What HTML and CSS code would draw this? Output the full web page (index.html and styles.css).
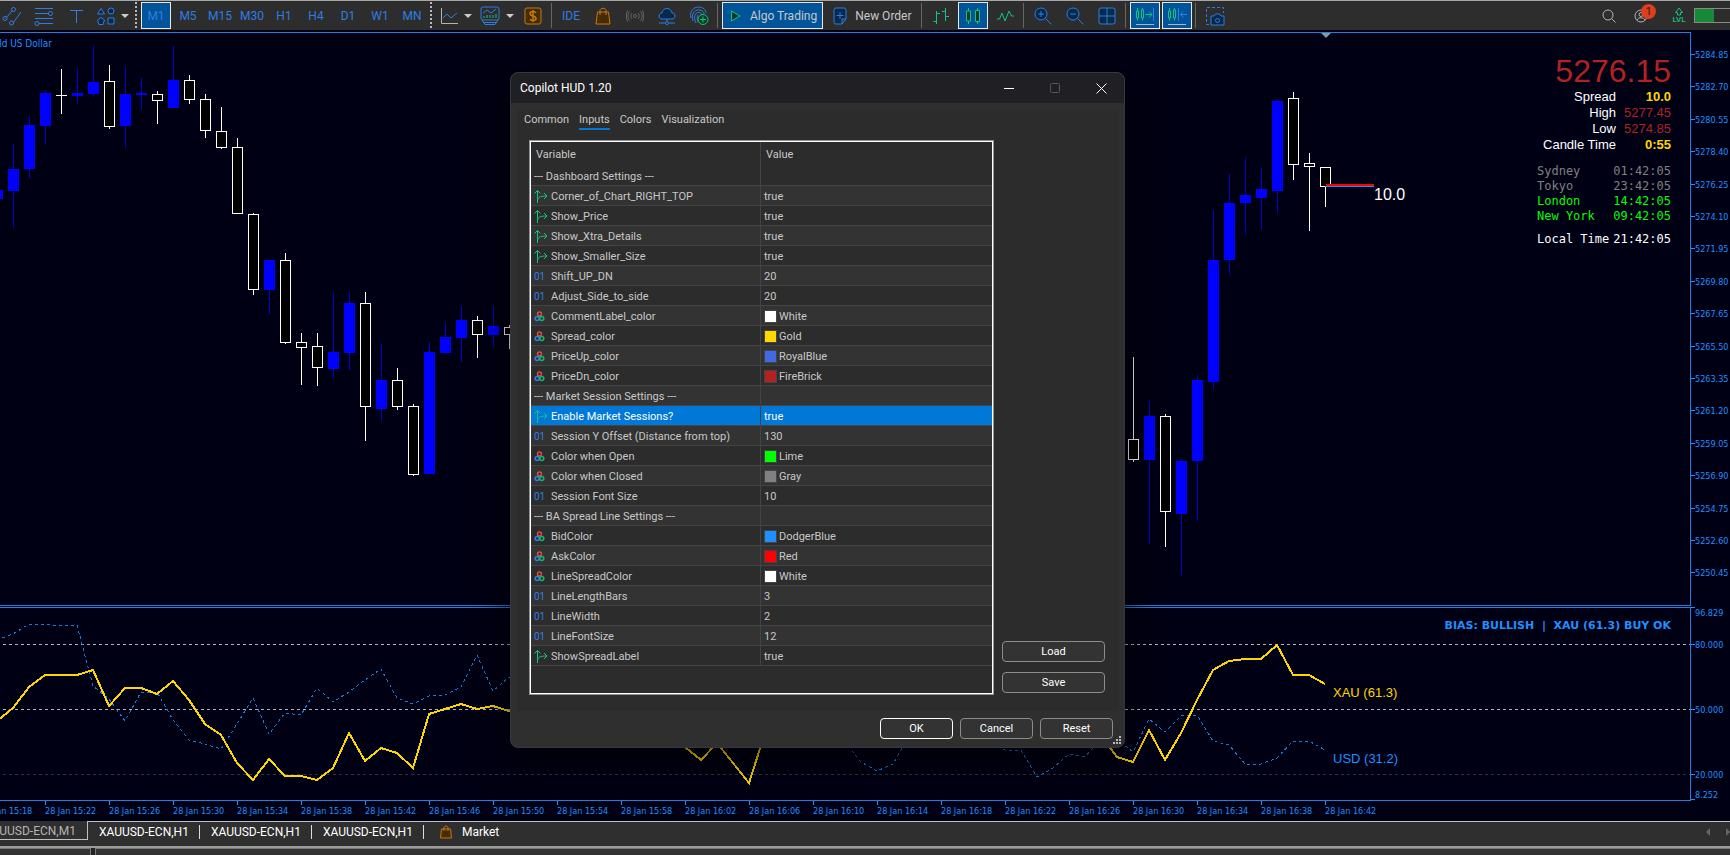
FILE: index.html
```html
<!DOCTYPE html>
<html lang="en">
<head>
  <meta charset="UTF-8">
  <title>XAUUSD-ECN,M1</title>
  <link rel="stylesheet" href="styles.css">
</head>
<body>

  <!-- Toolbar -->
  <header class="toolbar">
    <button class="tool" aria-label="Channel"><svg width="20" height="20" viewBox="0 0 20 20"><path d="M3.500 12.500L10 5M11 17L19 6"/><circle cx="3" cy="12.500" r="2"/><circle cx="11.500" cy="3.500" r="2"/><circle cx="9.500" cy="17" r="2"/></svg></button>
    <button class="tool" aria-label="Fibonacci"><svg width="20" height="20" viewBox="0 0 20 20"><path d="M1 2.500h18M1 7.500h14M1 12.500h18M5 17.500h14"/><circle cx="16.500" cy="7.500" r="2"/><circle cx="3" cy="17.500" r="2"/></svg></button>
    <button class="tool" aria-label="Text"><svg width="20" height="20" viewBox="0 0 20 20"><path d="M4 4.500h13M10.500 4.500V17"/></svg></button>
    <button class="tool tool-wide" aria-label="Objects"><svg class="shaded" width="18" height="20" viewBox="0 0 18 20"><path d="M4 2.500L7.500 8H.5zM11 12h6v6h-6zM4 11.500l3.500 2.500-1.500 4.500H2L.5 14z"/><circle cx="14" cy="5" r="3"/></svg><i class="caret"></i></button>
    <span class="grip-line"></span>

    <button class="tool period active">M1</button>
    <button class="tool period">M5</button>
    <button class="tool period">M15</button>
    <button class="tool period">M30</button>
    <button class="tool period">H1</button>
    <button class="tool period">H4</button>
    <button class="tool period">D1</button>
    <button class="tool period">W1</button>
    <button class="tool period">MN</button>
    <span class="grip-line"></span>

    <button class="tool tool-wide" aria-label="Chart type"><svg width="18" height="20" viewBox="0 0 18 20"><path class="gray" d="M1.500 2v15.500H18"/><path d="M3 12l4-4 4 4 6-5"/></svg><i class="caret"></i></button>
    <button class="tool tool-wide" aria-label="Indicators"><svg width="20" height="20" viewBox="0 0 20 20"><rect x="1" y="1" width="18" height="13" rx="2"/><path d="M3 7l4-3 4 3 5-4M2 14l3 4.500h10L18 14M3 16.500h14"/><path class="green" d="M4 12v-2M7 12v-3M10 12V9M13 12V9M16 12V8"/></svg><i class="caret"></i></button>
    <button class="tool" aria-label="Deposit"><svg class="orange" width="18" height="18" viewBox="0 0 18 18"><rect x="1" y="1" width="16" height="16" rx="2" fill="#452c04"/><path stroke-width="1.500" d="M12 6c-.5-1-1.500-1.500-3-1.500S6 5.200 6 6.500 7 8.500 9 9s3 1.200 3 2.500-1 2-3 2-2.500-.5-3-1.500M9 3v12"/></svg></button>
    <span class="divider"></span>
    <button class="tool period">IDE</button>
    <button class="tool" aria-label="Market"><svg class="orange" width="16" height="18" viewBox="0 0 16 18"><path fill="#452c04" d="M2.500 5h11L15 17H1z"/><path d="M5 8V3.500C5 .5 11 .5 11 3.500V8"/></svg></button>
    <button class="tool" aria-label="Signals"><svg class="dim" width="18" height="14" viewBox="0 0 18 14"><circle cx="9" cy="7" r="1.500"/><path d="M6 4c-1.500 1.700-1.500 4.300 0 6M12 4c1.500 1.700 1.500 4.300 0 6M3.500 2.500C1.500 5 1.500 9 3.500 11.500M14.500 2.500c2 2.500 2 6.500 0 9M1.500 1.500C0 4.500 0 9.500 1.500 12.500M16.500 1.500c1.500 3 1.500 8 0 11"/></svg></button>
    <button class="tool" aria-label="Virtual hosting"><svg class="shaded" width="18" height="18" viewBox="0 0 18 18"><path d="M4.500 12C2 12 1 10.500 1 9s1-3 3-3c.3-2.500 2.200-4.500 5-4.500S13.700 3.500 14 6c2 0 3 1.500 3 3s-1 3-3.500 3z"/><path d="M9 12v3M1 16h6M11 16h6"/><circle cx="9" cy="16" r="1.500"/></svg></button>
    <button class="tool" aria-label="Identity"><svg width="20" height="20" viewBox="0 0 20 20"><path d="M2 12C0 5 5 1 9.500 1S17 4 17 7M4 15C2 8 5 4 9.500 4S15 7 15 8M7 17C4 11 6 6.500 9.500 6.500c2 0 3 1 3 2.500M9 16c-1-3-1-6 0-7"/><g class="green"><circle cx="14" cy="13.500" r="5" fill="#123a2b"/><path d="M14 10.500v6M11 13.500h6"/></g></svg></button>
    <span class="divider"></span>

    <button class="text-tool active"><svg class="green" width="12" height="14" viewBox="0 0 12 14"><path fill="#123a2b" d="M1.500 2v10L10 7z"/></svg>Algo Trading</button>
    <button class="text-tool"><svg width="14" height="18" viewBox="0 0 14 18"><path fill="#07294a" d="M1 3q0-2 2-2h8q2 0 2 2v9l-4 5H3q-2 0-2-2zM13 12H9v5"/><path d="M7 5v7M3.500 8.500h7"/></svg>New Order</button>
    <span class="divider"></span>

    <button class="tool" aria-label="Bar chart"><svg class="green" width="18" height="18" viewBox="0 0 18 18"><path d="M4.500 4v13M1.500 14.500h3M4.500 6.500H8M13.500 1v13M10 4.500h3.500M13.500 9.500H17"/></svg></button>
    <button class="tool active" aria-label="Candlesticks"><svg class="green" width="18" height="18" viewBox="0 0 18 18"><path fill="#123a2b" d="M2.500 4h4v10h-4zM11.500 3.500h4v11h-4zM4.500 1v3M4.500 14v3M13.500 1v2.500M13.500 14.500V17"/></svg></button>
    <button class="tool" aria-label="Line chart"><svg class="green" width="18" height="18" viewBox="0 0 18 18"><path d="M1 12h2.500L6 6l3 8 4-10 2.500 5H18"/></svg></button>
    <span class="divider"></span>
    <button class="tool" aria-label="Zoom in"><svg width="18" height="18" viewBox="0 0 18 18"><circle cx="7" cy="7" r="6" fill="#07294a"/><path d="M11.500 11.500l6 6M7 4v6M4 7h6"/></svg></button>
    <button class="tool" aria-label="Zoom out"><svg width="18" height="18" viewBox="0 0 18 18"><circle cx="7" cy="7" r="6" fill="#07294a"/><path d="M11.500 11.500l6 6M4 7h6"/></svg></button>
    <button class="tool" aria-label="Tile windows"><svg class="shaded" width="18" height="18" viewBox="0 0 18 18"><rect x="1" y="1" width="16" height="16" rx="2"/><path d="M9 1v16M1 9h16"/></svg></button>
    <span class="divider"></span>
    <button class="tool active" aria-label="Auto scroll"><svg width="20" height="20" viewBox="0 0 20 20"><path class="green" d="M1.500 5h2v7h-2zM6.500 4h2v8h-2zM2.500 2v3M2.500 12v2.500M7.500 2v2M7.500 12v2.500M10.500 8.500H17M14 5.500l3 3-3 3"/><path d="M18.500 2v13"/><path class="gray" d="M1 18.500h18"/></svg></button>
    <button class="tool active" aria-label="Chart shift"><svg width="20" height="20" viewBox="0 0 20 20"><path class="green" d="M1.500 5h2v7h-2zM6.500 4h2v8h-2zM2.500 2v3M2.500 12v2.500M7.500 2v2M7.500 12v2.500"/><path d="M11.500 2v13M13.500 8.500H20M16.500 5.500l-3 3 3 3"/><path class="gray" d="M1 18.500h18"/></svg></button>
    <span class="divider"></span>
    <button class="tool" aria-label="Screenshot"><svg width="20" height="20" viewBox="0 0 20 20"><path stroke-dasharray="3 2" d="M4 18.500H1.500v-17h17V7"/><path fill="#07294a" d="M6 10h3l1.500-2h4L16 10h3v9H6z"/><circle cx="12.500" cy="14.500" r="2"/></svg></button>

    <div class="toolbar-right">
      <button class="tool" aria-label="Search"><svg class="gray" width="16" height="16" viewBox="0 0 16 16"><circle cx="7" cy="7" r="5"/><path d="M10.500 10.500l4 4"/></svg></button>
      <button class="tool account" aria-label="Account"><svg class="gray" width="14" height="14" viewBox="0 0 14 14"><circle cx="7" cy="7" r="6"/><circle cx="7" cy="5.500" r="2"/><path d="M3 11c1-3 7-3 8 0"/></svg><span class="badge">1</span></button>
      <div class="level"><svg class="green" width="10" height="9" viewBox="0 0 10 9"><path d="M3.500 8V5.500H1.500L5 1l3.500 4.500h-2V8z"/></svg>LVL</div>
      <div class="battery"><span></span></div>
    </div>
  </header>

  <!-- Chart window -->
  <main class="chart">
    <section class="pane price-pane">
      <div class="plot">
        <svg class="canvas" id="priceCanvas"></svg>
        <div class="hud">
          <div class="hud-price">5276.15</div>
          <dl class="hud-details">
            <dt>Spread</dt><dd class="gold">10.0</dd>
            <dt>High</dt><dd>5277.45</dd>
            <dt>Low</dt><dd>5274.85</dd>
            <dt>Candle Time</dt><dd class="gold">0:55</dd>
          </dl>
          <dl class="hud-sessions">
            <div><dt>Sydney</dt><dd>01:42:05</dd></div>
            <div><dt>Tokyo</dt><dd>23:42:05</dd></div>
            <div class="open"><dt>London</dt><dd>14:42:05</dd></div>
            <div class="open"><dt>New York</dt><dd>09:42:05</dd></div>
            <div class="local"><dt>Local Time</dt><dd>21:42:05</dd></div>
          </dl>
        </div>
      </div>
      <svg class="axis" id="priceAxis"></svg>
    </section>

    <section class="pane strength-pane">
      <div class="plot">
        <svg class="canvas" id="strengthCanvas"></svg>
        <div class="bias">BIAS: BULLISH&nbsp; |&nbsp; XAU (61.3) BUY OK</div>
      </div>
      <svg class="axis" id="strengthAxis"></svg>
    </section>

    <svg class="time-axis" id="timeAxis"></svg>

    <!-- Indicator properties -->
    <div class="dialog" role="dialog" aria-labelledby="dialogTitle">
      <div class="titlebar">
        <span class="title" id="dialogTitle">Copilot HUD 1.20</span>
        <button class="win-btn" aria-label="Minimize"><svg width="11" height="11" viewBox="0 0 11 11"><path d="M0 5.500h10"/></svg></button>
        <button class="win-btn" aria-label="Maximize" disabled><svg width="11" height="11" viewBox="0 0 11 11"><rect x=".5" y=".5" width="9" height="9" rx="1"/></svg></button>
        <button class="win-btn" aria-label="Close"><svg width="11" height="11" viewBox="0 0 11 11"><path d="M.5 .5l10 10M10.500 .5l-10 10"/></svg></button>
      </div>
      <div class="page">
        <nav class="tabs">
          <button>Common</button>
          <button class="selected">Inputs</button>
          <button>Colors</button>
          <button>Visualization</button>
        </nav>
        <div class="page-body">
          <div class="grid-box">
            <table class="inputs">
              <thead>
                <tr><th>Variable</th><th>Value</th></tr>
              </thead>
              <tbody id="inputRows">
                <!-- Rows are filled in below -->
              </tbody>
            </table>
          </div>
          <div class="side">
            <button class="btn">Load</button>
            <button class="btn">Save</button>
          </div>
        </div>
      </div>
      <div class="dialog-footer">
        <button class="btn primary">OK</button>
        <button class="btn">Cancel</button>
        <button class="btn">Reset</button>
      </div>
      <svg class="resize-grip" width="9" height="9" viewBox="0 0 9 9"><path d="M6 0h2v2H6zM3 3h2v2H3zM6 3h2v2H6zM0 6h2v2H0zM3 6h2v2H3zM6 6h2v2H6z"/></svg>
    </div>
  </main>

  <!-- Chart tabs -->
  <nav class="chart-tabs">
    <button class="chart-tab current">XAUUSD-ECN,M1</button>
    <button class="chart-tab">XAUUSD-ECN,H1</button>
    <button class="chart-tab">XAUUSD-ECN,H1</button>
    <button class="chart-tab">XAUUSD-ECN,H1</button>
    <button class="chart-tab market"><svg class="orange" width="12" height="14" viewBox="0 0 12 14"><path fill="#452c04" d="M1.500 4h9l1 9H.5z"/><path d="M4 6V3c0-2.500 4-2.500 4 0v3"/></svg>Market</button>
    <div class="scroll-arrows"><i class="arrow-left"></i><i class="arrow-right"></i></div>
  </nav>
  <footer class="toolbox">
    <div class="toolbox-left"></div>
    <div class="toolbox-main"></div>
  </footer>

  <script>
    const STEP = 16;

    // [high, bodyTop, bodyBottom, low, direction]
    const firstCandles = [
      [190, 190, 199, 199, 'u'], [144, 169, 191, 228, 'u'], [116, 125, 169, 178, 'u'], [90, 93, 126, 145, 'u'],
      [69, 95, 96, 114, 'd'], [68, 93, 96, 103, 'u'], [45, 82, 94, 97, 'u'], [65, 81, 127, 129, 'd'],
      [67, 94, 126, 148, 'u'], [78, 93, 95, 110, 'u'], [91, 94, 101, 124, 'd'], [46, 80, 108, 108, 'u'],
      [75, 80, 100, 104, 'd'], [94, 99, 131, 138, 'd'], [107, 131, 148, 149, 'd'], [138, 147, 214, 214, 'd'],
      [213, 214, 290, 295, 'd'], [260, 260, 290, 314, 'u'], [253, 260, 343, 344, 'd'], [333, 342, 348, 385, 'd'],
      [333, 346, 368, 386, 'd'], [292, 352, 369, 379, 'u'], [292, 303, 353, 370, 'u'], [292, 303, 407, 441, 'd'],
      [344, 380, 409, 421, 'u'], [368, 380, 407, 410, 'd'], [404, 406, 475, 476, 'd'], [342, 352, 474, 474, 'u'],
      [323, 337, 353, 353, 'u'], [306, 320, 338, 362, 'u'], [316, 320, 335, 358, 'd'], [306, 326, 335, 347, 'u'],
      [325, 327, 335, 349, 'd']
    ];
    const lastCandles = [
      [357, 439, 460, 462, 'd'], [401, 416, 460, 544, 'u'], [414, 416, 512, 547, 'd'], [459, 461, 514, 575, 'u'],
      [375, 380, 461, 521, 'u'], [210, 260, 382, 389, 'u'], [174, 203, 260, 275, 'u'], [157, 195, 203, 235, 'u'],
      [167, 189, 198, 230, 'u'], [99, 101, 191, 213, 'u'], [92, 98, 165, 180, 'd'], [153, 163, 167, 231, 'd'],
      [167, 167, 187, 207, 'd']
    ];

    function drawCandles(list, startX) {
      return list.map(([high, top, bottom, low, dir], i) => {
        const x = startX + i * STEP;
        let svg = `<rect class="wick ${dir}" x="${x}" y="${high}" width="1" height="${low - high}"/>`;
        if (dir === 'd' && bottom - top > 1) {
          svg += `<rect class="down" x="${x - 4.5}" y="${top + 0.5}" width="10" height="${bottom - top - 1}"/>`;
        } else {
          svg += `<rect class="wick ${dir} body" x="${x - 5}" y="${top}" width="11" height="${bottom - top}"/>`;
        }
        return svg;
      }).join('');
    }

    document.getElementById('priceCanvas').innerHTML = `
      <g transform="translate(0 -33)">
        <text class="symbol" x="52" y="47" text-anchor="end">Gold US Dollar</text>
        <path class="shift-mark" d="M1321 33h10l-5 5z"/>
        <g shape-rendering="crispEdges">
          ${drawCandles(firstCandles, -3)}
          ${drawCandles(lastCandles, 1133)}
          <rect class="ask" x="1326" y="184" width="48" height="2"/>
          <rect class="bid" x="1325" y="186" width="49" height="1"/>
        </g>
        <text class="spread-label" x="1374" y="200">10.0</text>
      </g>`;

    // Price scale
    let priceTicks = '';
    for (let i = 0; i < 17; i++) {
      const y = Math.round(22 + i * 32.4);
      priceTicks += `<rect x="0" y="${y}" width="4" height="1"/><text x="4" y="${y + 4}">${(5284.85 - i * 2.15).toFixed(2)}</text>`;
    }
    document.getElementById('priceAxis').innerHTML = priceTicks;

    // Strength lines
    const xau = [
      [-3, 721], [13, 708], [29, 687], [45, 675], [61, 675], [77, 675], [93, 670], [109, 706], [125, 688],
      [141, 688], [157, 694], [173, 681], [189, 700], [205, 724], [221, 735], [237, 763], [253, 780], [269, 759],
      [285, 776], [301, 776], [317, 780], [333, 768], [349, 733], [365, 761], [381, 748], [397, 753], [413, 768],
      [429, 714], [445, 709], [461, 704], [477, 709], [493, 706], [509, 711], [605, 715], [669, 733], [685, 747],
      [701, 760], [717, 743], [733, 763], [749, 783], [765, 733], [925, 690], [1085, 700], [1101, 736], [1117, 757],
      [1133, 762], [1149, 730], [1165, 760], [1181, 733], [1197, 700], [1213, 670], [1229, 661], [1245, 659],
      [1261, 659], [1277, 645], [1293, 675], [1309, 675], [1325, 684]
    ];
    const usd = [
      [-3, 640], [13, 634], [29, 624], [45, 624], [61, 626], [77, 625], [93, 686], [109, 699], [125, 721],
      [141, 692], [157, 692], [173, 720], [189, 740], [205, 744], [221, 749], [237, 724], [253, 698], [269, 734],
      [285, 713], [301, 715], [317, 688], [333, 702], [349, 692], [365, 680], [381, 669], [397, 698], [413, 704],
      [429, 696], [445, 695], [461, 687], [477, 655], [493, 691], [509, 677], [701, 690], [829, 725], [845, 742],
      [861, 762], [877, 771], [893, 764], [909, 736], [989, 740], [1005, 750], [1021, 750], [1037, 777], [1053, 768],
      [1069, 754], [1085, 757], [1101, 739], [1117, 739], [1133, 752], [1149, 719], [1165, 732], [1181, 716],
      [1197, 715], [1213, 741], [1229, 745], [1245, 764], [1261, 764], [1277, 758], [1293, 741], [1309, 741],
      [1325, 750]
    ];

    document.getElementById('strengthCanvas').innerHTML = `
      <g transform="translate(0 -608)">
        <g shape-rendering="crispEdges">
          <line class="level-line" x1="3" x2="100%" y1="644.5" y2="644.5"/>
          <line class="level-line" x1="3" x2="100%" y1="709.5" y2="709.5"/>
          <line class="level-line faint" x1="3" x2="100%" y1="774.5" y2="774.5"/>
          <polyline class="usd" points="${usd.join(' ')}"/>
          <polyline class="xau" points="${xau.join(' ')}"/>
        </g>
        <text class="line-label xau-label" x="1333" y="697">XAU (61.3)</text>
        <text class="line-label usd-label" x="1333" y="763">USD (31.2)</text>
      </g>`;

    const strengthTicks = [[0, 9, '96.829'], [37, 41, '80.000'], [102, 106, '50.000'], [167, 171, '20.000'], [192, 191, '8.252']];
    document.getElementById('strengthAxis').innerHTML = strengthTicks.map(([tick, y, label]) =>
      `<rect x="0" y="${tick}" width="4" height="1"/><text x="4" y="${y}">${label}</text>`).join('');

    // Time scale, one label every four bars
    let timeTicks = '';
    for (let i = 0; i < 22; i++) {
      const minutes = 15 * 60 + 18 + i * 4;
      const time = Math.floor(minutes / 60) + ':' + String(minutes % 60).padStart(2, '0');
      const x = -19 + i * 64;
      timeTicks += `<rect x="${x}" y="0" width="1" height="4"/><text x="${x}" y="13">28 Jan ${time}</text>`;
    }
    document.getElementById('timeAxis').innerHTML = timeTicks;

    // Indicator inputs: [type, name, value]
    const inputs = [
      ['section', '--- Dashboard Settings ---', ''],
      ['bool', 'Corner_of_Chart_RIGHT_TOP', 'true'],
      ['bool', 'Show_Price', 'true'],
      ['bool', 'Show_Xtra_Details', 'true'],
      ['bool', 'Show_Smaller_Size', 'true'],
      ['int', 'Shift_UP_DN', '20'],
      ['int', 'Adjust_Side_to_side', '20'],
      ['color', 'CommentLabel_color', 'White'],
      ['color', 'Spread_color', 'Gold'],
      ['color', 'PriceUp_color', 'RoyalBlue'],
      ['color', 'PriceDn_color', 'FireBrick'],
      ['section', '--- Market Session Settings ---', ''],
      ['bool', 'Enable Market Sessions?', 'true'],
      ['int', 'Session Y Offset (Distance from top)', '130'],
      ['color', 'Color when Open', 'Lime'],
      ['color', 'Color when Closed', 'Gray'],
      ['int', 'Session Font Size', '10'],
      ['section', '--- BA Spread Line Settings ---', ''],
      ['color', 'BidColor', 'DodgerBlue'],
      ['color', 'AskColor', 'Red'],
      ['color', 'LineSpreadColor', 'White'],
      ['int', 'LineLengthBars', '3'],
      ['int', 'LineWidth', '2'],
      ['int', 'LineFontSize', '12'],
      ['bool', 'ShowSpreadLabel', 'true']
    ];
    const icons = {
      section: '',
      bool: '<svg class="type-icon green" width="13" height="13" viewBox="0 0 13 13"><path d="M3.500 13V.5M.5 3.500l3-3 3 3M3.500 11c0-3.500 2-5 9-5M10 3l3 3-3 3"/></svg>',
      int: '<span class="type-icon number">01</span>',
      color: '<svg class="type-icon rgb" width="13" height="13" viewBox="0 0 13 13"><circle cx="5.500" cy="4" r="2" stroke="#e04848"/><circle cx="3.200" cy="8.500" r="2" stroke="#2f80ed"/><circle cx="7.800" cy="8.500" r="2" stroke="#12b76a"/></svg>'
    };

    const inputRows = document.getElementById('inputRows');
    inputs.forEach(([type, name, value]) => {
      const row = document.createElement('tr');
      if (name === 'Enable Market Sessions?') row.className = 'selected';
      const swatch = type === 'color' ? `<i class="swatch" style="background:${value.toLowerCase()}"></i>` : '';
      row.innerHTML = `
        <td><div class="cell">${icons[type]}${name}</div></td>
        <td><div class="cell">${swatch}${value}</div></td>
      `;
      inputRows.appendChild(row);
    });
  </script>

</body>
</html>
```

FILE: styles.css
```css
* {
  box-sizing: border-box;
}

body {
  margin: 0;
  height: 100vh;
  display: flex;
  flex-direction: column;
  overflow: hidden;
  background: #000014;
  color: #c8c8c8;
  font-family: Roboto, "Liberation Sans", sans-serif;
  font-size: 12px;
}

button {
  font: inherit;
  color: inherit;
  background: none;
  border: 0;
  padding: 0;
}

dl, dd {
  margin: 0;
}

svg {
  display: block;
}

/* toolbar */
.toolbar {
  flex: none;
  display: flex;
  align-items: center;
  height: 30px;
  background: #2d2d2d;
  border-top: 1px solid #a5a8a5;
}

.toolbar svg,
.chart-tabs svg {
  fill: none;
  stroke: #2f7de1;
}

.toolbar .shaded {
  fill: #07294a;
}

.toolbar .green,
.inputs .green {
  stroke: #12c47d;
}

.toolbar .gray {
  stroke: #b4b4b4;
}

.toolbar .dim {
  stroke: #666;
}

.toolbar .orange,
.chart-tabs .orange {
  stroke: #c8780a;
}

.tool {
  flex: none;
  display: flex;
  align-items: center;
  justify-content: center;
  width: 30px;
  height: 27px;
  margin: 0 1px;
  border: 1px solid transparent;
}

.tool:first-child {
  margin-left: -3px;
}

.tool-wide {
  width: 39px;
  gap: 6px;
}

.period {
  color: #2f7de1;
}

.tool.active,
.text-tool.active {
  background: #005499;
  border-color: #e8e8e8;
}

.caret {
  border: 4px solid transparent;
  border-top: 4px solid #ccc;
  border-bottom: 0;
}

.grip-line {
  flex: none;
  width: 2px;
  height: 28px;
  margin: 0 3px 0 2px;
  background: repeating-linear-gradient(#bbb 0 2px, transparent 2px 4px);
}

.divider {
  flex: none;
  width: 1px;
  height: 25px;
  margin: 0 3px 0 2px;
  background: #666;
}

.text-tool {
  flex: none;
  display: flex;
  align-items: center;
  gap: 8px;
  height: 27px;
  padding: 0 5px 0 7px;
  margin: 0 1px;
  border: 1px solid transparent;
}

.toolbar-right {
  display: flex;
  align-items: center;
  margin-left: auto;
}

.account {
  position: relative;
}

.badge {
  position: absolute;
  top: 1px;
  right: -1px;
  width: 15px;
  height: 15px;
  border-radius: 50%;
  background: #e03c20;
  color: #222;
  font-size: 11px;
  line-height: 15px;
}

.level {
  width: 30px;
  margin-left: 7px;
  display: flex;
  flex-direction: column;
  align-items: center;
  color: #12c47d;
  font-size: 8px;
  font-weight: 500;
  line-height: 8px;
}

.battery {
  width: 36px;
  height: 15px;
  border: 1px solid #888;
  border-right: 0;
}

.battery span {
  display: block;
  width: 19px;
  height: 13px;
  background: #168a36;
}

/* chart */
.chart {
  flex: 1;
  min-height: 0;
  position: relative;
  display: flex;
  flex-direction: column;
  gap: 1px;
  padding-top: 2px;
}

.pane {
  display: flex;
}

.price-pane {
  flex: 1;
  min-height: 0;
}

.strength-pane {
  flex: none;
  height: 194px;
}

.plot {
  flex: 1;
  position: relative;
  border: 1px solid #1e80e0;
  border-left: 0;
}

.canvas {
  position: absolute;
  width: 100%;
  height: 100%;
}

.axis {
  width: 39px;
  height: 100%;
}

.axis,
.time-axis {
  fill: #1e90ff;
  font-family: "DejaVu Sans Condensed", "DejaVu Sans", sans-serif;
  font-size: 9px;
}

.time-axis {
  flex: none;
  width: 100%;
  height: 20px;
  margin-top: -1px;
}

.symbol {
  fill: #1e90ff;
  font-family: "DejaVu Sans Condensed", "DejaVu Sans", sans-serif;
  font-size: 10px;
}

.shift-mark {
  fill: #8896a8;
}

.wick.u {
  fill: #0000c8;
}

.wick.u.body {
  fill: #0000ff;
}

.wick.d {
  fill: #fff;
}

.down {
  fill: #000;
  stroke: #fff;
}

.ask {
  fill: #f00;
}

.bid {
  fill: #1e90ff;
}

.spread-label {
  fill: #fff;
  font-family: "Liberation Sans", Arial, sans-serif;
  font-size: 16px;
}

.level-line {
  stroke: #b4b4b4;
  stroke-dasharray: 3 3;
}

.level-line.faint {
  stroke: #333333;
}

.usd {
  fill: none;
  stroke: #1a7ad8;
  stroke-dasharray: 3 3;
}

.xau {
  fill: none;
  stroke: #ffd700;
  stroke-width: 2;
}

.line-label {
  font-family: "Liberation Sans", Arial, sans-serif;
  font-size: 13px;
}

.xau-label {
  fill: #ffd700;
}

.usd-label {
  fill: #1e90ff;
}

.bias {
  position: absolute;
  top: 10px;
  right: 19px;
  color: #1e90ff;
  font: bold 11px/16px "DejaVu Sans", sans-serif;
}

/* heads-up display */
.hud {
  position: absolute;
  top: 20px;
  right: 19px;
  display: flex;
  flex-direction: column;
  align-items: flex-end;
  font-family: "Liberation Sans", Arial, sans-serif;
  font-size: 13px;
  line-height: 16px;
  color: #fff;
}

.hud-price {
  color: #b22222;
  font-size: 32px;
  line-height: 36px;
}

.hud-details {
  display: grid;
  grid-template-columns: auto 55px;
  text-align: right;
}

.hud-details dd {
  color: #b22222;
}

.hud-details .gold {
  color: #ffd700;
  font-weight: bold;
}

.hud-sessions {
  width: 134px;
  margin-top: 11px;
  font-family: "DejaVu Sans Mono", monospace;
  font-size: 12px;
  line-height: 15px;
  color: #808080;
}

.hud-sessions div {
  display: flex;
  justify-content: space-between;
}

.hud-sessions .open {
  color: #00ff00;
}

.hud-sessions .local {
  margin-top: 8px;
  color: #fff;
}

/* properties window */
.dialog {
  position: absolute;
  top: 42px;
  left: 510px;
  width: 615px;
  background: #2f2f2f;
  border: 1px solid #38383c;
  border-radius: 8px;
  box-shadow: 0 10px 34px 4px rgba(0, 0, 0, 0.6);
  font-size: 11px;
}

.titlebar {
  display: flex;
  align-items: center;
  height: 30px;
  padding-left: 9px;
  border-radius: 8px 8px 0 0;
  background: #1f1f24;
  color: #fff;
  font-size: 12px;
}

.title {
  flex: 1;
}

.win-btn {
  display: flex;
  align-items: center;
  justify-content: center;
  width: 46px;
  height: 30px;
}

.win-btn svg {
  fill: none;
  stroke: #fff;
}

.win-btn:disabled svg {
  stroke: #55555a;
}

.page {
  margin: 7px 5px 0 6px;
  padding-bottom: 16px;
  background: #2c2c2c;
}

.tabs {
  display: flex;
  gap: 10px;
  padding: 0 7px;
}

.tabs button {
  height: 20px;
  border-bottom: 2px solid transparent;
}

.tabs .selected {
  border-color: #0078d7;
}

.page-body {
  display: flex;
  gap: 8px;
  margin-top: 10px;
  padding: 0 14px 0 12px;
}

.grid-box {
  flex: 1;
  height: 555px;
  border: 1px solid #8f959c;
  outline: 1px solid #fff;
  outline-offset: -2px;
  padding: 1px;
}

.inputs {
  width: 100%;
  table-layout: fixed;
  border-collapse: separate;
  border-spacing: 0;
}

.inputs th,
.inputs td {
  height: 20px;
  padding: 0 4px 0 3px;
  text-align: left;
  font-weight: normal;
  border-bottom: 1px solid #444;
}

.inputs th {
  height: 24px;
  padding-left: 5px;
  border-bottom: 0;
}

.inputs th:first-child,
.inputs td:first-child {
  width: 230px;
  border-right: 1px solid #444;
}

.inputs tbody tr:nth-child(even) {
  background: #333;
}

.inputs tbody .selected {
  background: #0078d7;
  color: #fff;
}

.cell {
  display: flex;
  align-items: center;
  height: 19px;
  padding-top: 2px;
}

.type-icon {
  flex: none;
  width: 13px;
  margin-right: 4px;
  fill: none;
}

.rgb {
  stroke-width: 1.5px;
}

.number {
  color: #2f7de1;
  font-size: 10px;
}

.swatch {
  width: 13px;
  height: 13px;
  margin-right: 2px;
  border: 1px solid #444;
}

.side {
  display: flex;
  flex-direction: column;
  justify-content: flex-end;
  gap: 10px;
  width: 103px;
  padding-bottom: 2px;
}

.btn {
  height: 21px;
  border: 1px solid #8c8c8c;
  border-radius: 4px;
  background: #333;
  color: #fff;
}

.btn.primary {
  border-color: #fff;
}

.dialog-footer {
  display: flex;
  justify-content: flex-end;
  gap: 7px;
  padding: 7px 11px 8px;
}

.dialog-footer .btn {
  width: 73px;
}

.resize-grip {
  position: absolute;
  right: 2px;
  bottom: 2px;
  fill: #bbb;
}

/* bottom */
.chart-tabs {
  flex: none;
  display: flex;
  height: 25px;
  background: #2f2f2f;
}

.chart-tab {
  position: relative;
  display: flex;
  align-items: center;
  padding: 0 11px 4px;
  border-top: 1px solid #c0c0c0;
  color: #fff;
}

.chart-tab:not(.current):not(.market)::after {
  content: "";
  position: absolute;
  right: 0;
  width: 1px;
  height: 14px;
  background: #ddd;
}

.chart-tab.current {
  height: 19px;
  margin-left: -28px;
  padding-bottom: 0;
  padding-top: 2px;
  border: 1px solid #c0c0c0;
  border-top: 0;
  color: #b4b4b4;
}

.market {
  gap: 10px;
  padding-left: 16px;
}

.scroll-arrows {
  flex: 1;
  display: flex;
  align-items: center;
  justify-content: flex-end;
  gap: 16px;
  padding-bottom: 4px;
  border-top: 1px solid #c0c0c0;
}

.scroll-arrows i {
  border: 4px solid transparent;
}

.scroll-arrows .arrow-left {
  border-left: 0;
  border-right-color: #666;
}

.scroll-arrows .arrow-right {
  border-right: 0;
  border-left-color: #666;
}

.toolbox {
  flex: none;
  display: flex;
  gap: 4px;
  height: 9px;
  background: #222;
  border-top: 2px solid #999c99;
}

.toolbox-left {
  width: 91px;
  background: #333;
  border: 1px solid #777;
  border-width: 1px 1px 0 0;
}

.toolbox-main {
  flex: 1;
  background: #333;
  border: 1px solid #777;
  border-width: 1px 0 0 1px;
}
```
